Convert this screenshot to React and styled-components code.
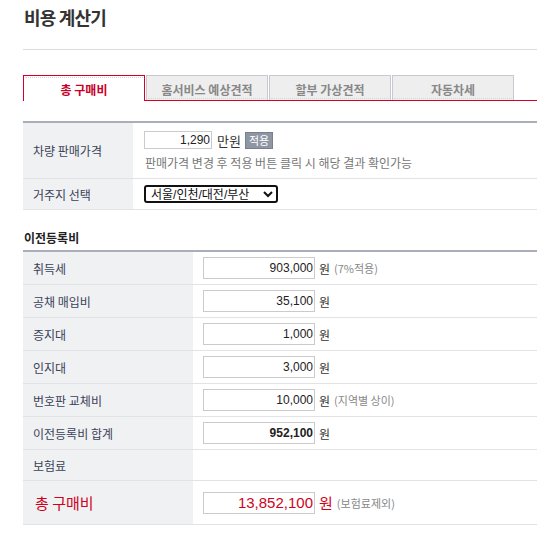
import styled, { createGlobalStyle } from "styled-components"

const GlobalStyle = createGlobalStyle`
    body {
        margin: 0;
        background: #fff;
        font-family: "Noto Sans CJK KR", "Noto Sans", sans-serif;
        font-size: 12px;
        color: #333;
    }
`

const Page = styled.div`
    width: 514px;
    padding: 0 9px 0 23px;
`

const Header = styled.div`
    height: 49px;
    border-bottom: 1px solid #dcdcdc;
    display: flex;
    align-items: flex-start;
`

const Title = styled.h2`
    margin: 0;
    padding-left: 1px;
    font-size: 18px;
    font-weight: 700;
    letter-spacing: -0.8px;
    line-height: 35px;
    color: #333;
`

const TabBar = styled.ul`
    display: flex;
    gap: 1px;
    margin: 25px 0 0;
    padding: 0;
    list-style: none;
    height: 25px;
    border-bottom: 1px solid #d4002a;
`

const Tab = styled.li`
    position: relative;
    box-sizing: border-box;
    width: 122px;
    height: ${(props) => props.active ? "26px" : "25px"};
    display: flex;
    align-items: center;
    justify-content: center;
    padding-top: 2px;
    border: 1px solid ${(props) => props.active ? "#d4002a" : "#c6c9d0"};
    border-bottom: none;
    background: ${(props) => props.active ? "#fff" : "#eeeeee"};
    color: ${(props) => props.active ? "#c8002a" : "#888"};
    font-weight: 700;
    font-size: 12px;
    z-index: ${(props) => props.active ? 1 : 0};

    &::after {
        content: "";
        position: absolute;
        left: 1px;
        right: 1px;
        ${(props) => props.active ? "top: 1px;" : "bottom: 1px;"}
        border-top: 1px dotted ${(props) => props.active ? "#f2c4cc" : "#d6d6d6"};
    }
`

const Table = styled.div`
    margin-top: ${(props) => props.top || 0}px;
    border-top: 2px solid #a9aeb9;
`

const Row = styled.div`
    box-sizing: border-box;
    display: flex;
    height: ${(props) => props.h}px;
    border-bottom: 1px solid #e2e3e6;
`

const Label = styled.div`
    width: ${(props) => props.w}px;
    flex-shrink: 0;
    box-sizing: border-box;
    padding-left: ${(props) => props.red ? 12 : 10}px;
    background: #f0f1f3;
    display: flex;
    align-items: center;
    font-size: ${(props) => props.red ? "15px" : "12px"};
    color: ${(props) => props.red ? "#d0021b" : "#3b4258"};
`

const Cell = styled.div`
    flex: 1;
    padding-left: ${(props) => props.pad || 10}px;
    display: flex;
    flex-direction: ${(props) => props.column ? "column" : "row"};
    justify-content: ${(props) => props.column ? "center" : "flex-start"};
    align-items: ${(props) => props.column ? "flex-start" : "center"};
`

const Line = styled.div`
    display: flex;
    align-items: center;
`

const Amount = styled.input`
    box-sizing: border-box;
    width: ${(props) => props.w || 112}px;
    height: ${(props) => props.h || 22}px;
    margin: 0;
    padding: 0 1px 0 0;
    border: 1px solid #cbcbcb;
    background: #fff;
    text-align: right;
    font-family: "Liberation Sans", "Noto Sans CJK KR", sans-serif;
    font-size: ${(props) => props.big ? "15px" : "12px"};
    font-weight: ${(props) => props.bold ? 700 : 400};
    color: ${(props) => props.big ? "#d0021b" : "#222"};
    outline: none;
`

const Unit = styled.span`
    margin-left: ${(props) => props.gap || 4}px;
    font-size: ${(props) => props.size || 12}px;
    color: ${(props) => props.red ? "#d0021b" : "#333"};
`

const Note = styled.span`
    margin-left: 4px;
    font-size: 11px;
    color: #888;
`

const ApplyButton = styled.button`
    box-sizing: border-box;
    margin-left: 4px;
    height: 17px;
    padding: 0 3px;
    border: 1px solid #78808e;
    background: #8e96a4;
    color: #fff;
    font-family: inherit;
    font-size: 11px;
    line-height: 14px;
`

const Help = styled.p`
    margin: 5px 0 0 1px;
    font-size: 12px;
    line-height: 16px;
    color: #777;
`

const Region = styled.select`
    box-sizing: border-box;
    height: 18px;
    width: 134px;
    margin: 0;
    padding: 0 1px;
    border: 2px solid #111;
    border-radius: 3px;
    background: #fff;
    font-family: "Liberation Sans", "Noto Sans CJK KR", sans-serif;
    font-size: 12px;
    line-height: 14px;
    color: #111;
`

const SectionTitle = styled.h3`
    margin: 18px 0 2px 1px;
    font-size: 12px;
    font-weight: 700;
    line-height: 20px;
    color: #222;
`

const fees = [
    { label: "취득세", value: "903,000", note: "(7%적용)" },
    { label: "공채 매입비", value: "35,100" },
    { label: "증지대", value: "1,000" },
    { label: "인지대", value: "3,000" },
    { label: "번호판 교체비", value: "10,000", note: "(지역별 상이)" },
    { label: "이전등록비 합계", value: "952,100", bold: true },
]

const tabs = ["총 구매비", "홈서비스 예상견적", "할부 가상견적", "자동차세"]

function App() {
    return (
        <Page>
            <GlobalStyle />
            <Header>
                <Title>비용 계산기</Title>
            </Header>

            <TabBar>
                {tabs.map((tab, i) => <Tab key={tab} active={i === 0}>{tab}</Tab>)}
            </TabBar>

            <Table top={20}>
                <Row h={56}>
                    <Label w={110}>차량 판매가격</Label>
                    <Cell pad={11} column>
                        <Line>
                            <Amount w={68} h={18} defaultValue="1,290" />
                            <Unit size={13} gap={5}>만원</Unit>
                            <ApplyButton>적용</ApplyButton>
                        </Line>
                        <Help>판매가격 변경 후 적용 버튼 클릭 시 해당 결과 확인가능</Help>
                    </Cell>
                </Row>
                <Row h={31}>
                    <Label w={110}>거주지 선택</Label>
                    <Cell pad={11}>
                        <Region defaultValue="seoul">
                            <option value="seoul">서울/인천/대전/부산</option>
                        </Region>
                    </Cell>
                </Row>
            </Table>

            <SectionTitle>이전등록비</SectionTitle>
            <Table>
                {fees.map((fee) => (
                    <Row h={33} key={fee.label}>
                        <Label w={170}>{fee.label}</Label>
                        <Cell>
                            <Amount defaultValue={fee.value} bold={fee.bold} />
                            <Unit>원</Unit>
                            {fee.note && <Note>{fee.note}</Note>}
                        </Cell>
                    </Row>
                ))}
                <Row h={31}>
                    <Label w={170}>보험료</Label>
                    <Cell />
                </Row>
                <Row h={44}>
                    <Label w={170} red>총 구매비</Label>
                    <Cell>
                        <Amount big defaultValue="13,852,100" />
                        <Unit size={15} red>원</Unit>
                        <Note>(보험료제외)</Note>
                    </Cell>
                </Row>
            </Table>
        </Page>
    )
}

export default App
